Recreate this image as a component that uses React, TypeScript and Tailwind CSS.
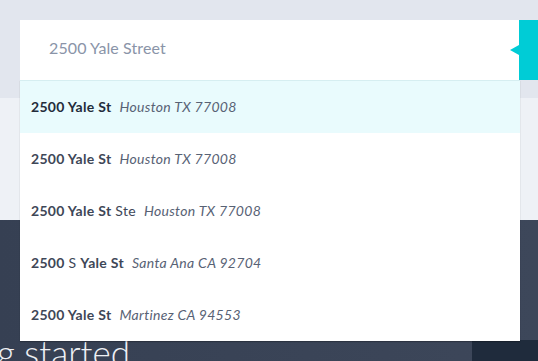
import React from "react";

const rows = [
  { pre: "2500 Yale St", mid: "", post: "", city: "Houston TX 77008", active: true },
  { pre: "2500 Yale St", mid: "", post: "", city: "Houston TX 77008" },
  { pre: "2500 Yale St", mid: " Ste", post: "", city: "Houston TX 77008" },
  { pre: "2500", mid: " S ", post: "Yale St", city: "Santa Ana CA 92704" },
  { pre: "2500 Yale St", mid: "", post: "", city: "Martinez CA 94553" },
];

export default function App() {
  return (
    <div
      className="relative w-[538px] h-[361px] overflow-hidden"
      style={{ fontFamily: "Lato, 'Noto Sans', sans-serif" }}
    >
      <div className="h-[98px] bg-[#e2e6ee]" />
      <div className="h-[122px] bg-[#eef1f6]" />
      <div className="relative h-[141px] bg-gradient-to-r from-[#364053] to-[#3d475a]">
        <div className="absolute left-[-3px] top-[115px] text-[35px] font-light leading-none text-[#eef0f4]">
          g started
        </div>
        <div className="absolute left-[472px] top-[120px] w-[66px] h-[21px] bg-[#1f2b3c]" />
      </div>

      <div className="absolute left-[20px] top-[20px] w-[518px]">
        <div className="flex h-[60px]">
          <div className="relative flex-1 bg-white flex items-center pl-[29px] pb-[4px] text-[16px] tracking-[0.1px] text-[#8a94a8]">
            2500 Yale Street
            <div className="absolute right-0 top-[25px] w-0 h-0 border-y-[5px] border-y-transparent border-r-[9px] border-r-[#00ccd6]" />
          </div>
          <div className="w-[19px] bg-[#00ccd6]" />
        </div>
        <div className="w-[500px] border-t border-[#d6eef1] bg-white shadow-[0_1px_1px_rgba(0,0,0,0.25)]">
          {rows.map((r, i) => (
            <div
              key={i}
              className={`flex items-center h-[52px] pl-[11px] pb-[2px] text-[14px] tracking-[0.3px] ${
                r.active ? "bg-[#e9fbfd]" : "bg-white"
              }`}
            >
              {r.mid === " S " ? (
                <span className={r.active ? "text-[#232c3b]" : "text-[#3e4757]"}>
                  <span className="font-bold">{r.pre}</span>
                  <span className="whitespace-pre">{r.mid}</span>
                  <span className="font-bold">{r.post}</span>
                </span>
              ) : (
                <span className={r.active ? "text-[#232c3b]" : "text-[#3e4757]"}>
                  <span className="font-bold">{r.pre}</span>
                  <span className="whitespace-pre">{r.mid}</span>
                </span>
              )}
              <span className="ml-[8px] italic text-[#586275]">{r.city}</span>
            </div>
          ))}
        </div>
      </div>
    </div>
  );
}
